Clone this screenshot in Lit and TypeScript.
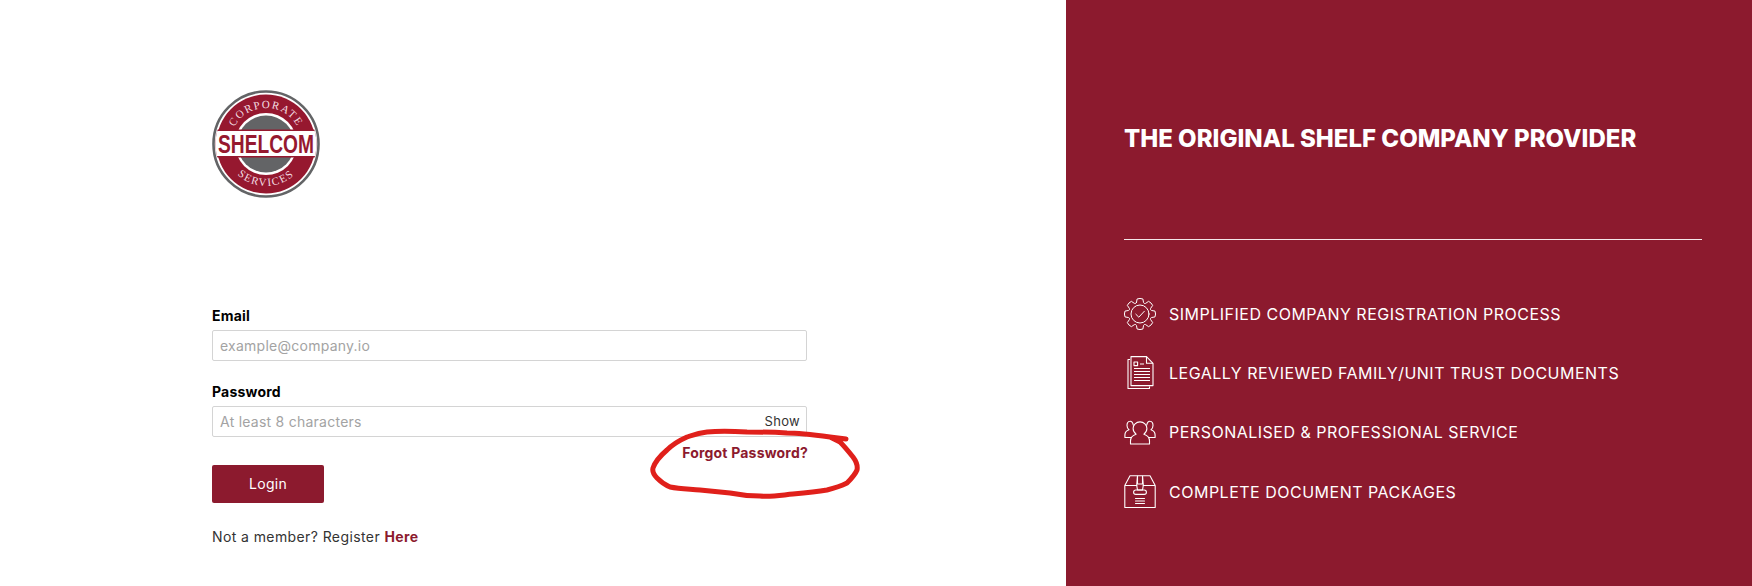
import { LitElement, html, css, svg } from "lit";
import { customElement } from "lit/decorators.js";

const RED = css`#8c1a2e`;

function gearPath(): string {
  const c = 16;
  const pt = (r: number, a: number) =>
    `${(c + r * Math.sin(a)).toFixed(2)} ${(c - r * Math.cos(a)).toFixed(2)}`;
  let d = "";
  for (let i = 0; i < 8; i++) {
    const a = (i * Math.PI) / 4;
    const next = a + Math.PI / 4;
    d += i === 0 ? `M${pt(12, a - 0.3)}` : "";
    d += `L${pt(15.3, a - 0.19)}Q${pt(16.1, a)} ${pt(15.3, a + 0.19)}L${pt(12, a + 0.3)}`;
    d += `Q${pt(10.8, a + Math.PI / 8)} ${pt(12, next - 0.3)}`;
  }
  return d + "Z";
}

const gear = svg`<svg class="ic" viewBox="0 0 32 32" fill="none" stroke="#fff" stroke-width="1" stroke-linejoin="round" stroke-linecap="round">
  <path d=${gearPath()}/>
  <circle cx="16" cy="16" r="9"/><path d="M11.800 16.200l3 3 5.600-6"/></svg>`;
const doc = svg`<svg class="ic doc" viewBox="0 0 27 33" fill="none" stroke="#fff" stroke-width="1.1" stroke-linejoin="round">
  <path d="M3 3.500H1v29h21.500v-2"/><path d="M4 .6h15.500l6.500 6.700v22.300H4z"/><path d="M19.500.6v6.700H26"/>
  <rect x="7" y="6" width="3.600" height="3.600"/>
  <path d="M13 8h4M7 12.500h16M7 15.500h16M7 18.500h16M7 21.500h16M7 24.500h16" stroke-width="1.200"/></svg>`;
const people = svg`<svg class="ic ppl" viewBox="0 0 32 25" fill="none" stroke="#fff" stroke-width="1.1" stroke-linejoin="round" stroke-linecap="round">
  <path d="M6.500 24V21c0-4 3-6 5.600-6.800-1.800-1.300-3-3.300-3-5.600C9.100 4.700 12.100 1.900 16 1.900s6.900 2.800 6.900 6.700c0 2.300-1.200 4.300-3 5.600 2.600.8 5.600 2.800 5.600 6.800v3z"/>
  <path d="M9.300 5.200C8.900 2.700 7.500 1 5.900 1.300 3.700 1.600 3 3.700 3 5.500c0 1.500.6 3.100 2 4.200C2.700 10.500.9 12.300.9 15c0 .8 0 1.800 0 2.500h6.400"/>
  <path d="M22.700 5.200C23.100 2.700 24.500 1 26.100 1.300 28.300 1.600 29 3.700 29 5.500c0 1.500-.6 3.100-2 4.200 2.300.8 4.100 2.600 4.100 5.300 0 .8 0 1.800 0 2.500h-6.400"/></svg>`;
const box = svg`<svg class="ic bx" viewBox="0 0 32 33" fill="none" stroke="#fff" stroke-width="1.1" stroke-linejoin="round" stroke-linecap="round">
  <path d="M.8 10.500L6 .8h6.800M19.200.8H26l5.200 9.700M.8 10.500v22h30.400v-22M.8 10.500h12M19.200 10.500h12"/>
  <path d="M13.500.8h5l.8 9.500-.8 4.700h-5l-.8-4.700z"/><path d="M13.500 1v8h5V1"/>
  <rect x="9.600" y="15" width="12.800" height="4.400" rx="2.200"/>
  <path d="M11.500 23.500h9M11.500 26h9M11.500 28.500h9"/></svg>`;

const logo = svg`<svg class="logo" viewBox="0 0 110 110">
  <defs>
    <path id="arcTop" d="M19 55a36 36 0 0 1 72 0"/>
    <path id="arcBot" d="M13 55a42 42 0 0 0 84 0"/>
    <clipPath id="disc"><circle cx="55" cy="55" r="50.500"/></clipPath>
  </defs>
  <circle cx="55" cy="55" r="52.500" fill="#fff" stroke="#636466" stroke-width="2.600"/>
  <circle cx="55" cy="55" r="49.500" fill="#96182f"/>
  <circle cx="55" cy="55" r="31" fill="#fff"/>
  <circle cx="55" cy="55" r="28.500" fill="#636466"/>
  <g clip-path="url(#disc)">
    <rect x="0" y="40.500" width="110" height="28" fill="#96182f"/>
    <rect x="0" y="42" width="110" height="25" fill="#fff"/>
  </g>
  <text class="sh" x="55" y="64" text-anchor="middle" textLength="96" lengthAdjust="spacingAndGlyphs">SHELCOM</text>
  <text class="arc"><textPath href="#arcTop" startOffset="50%" text-anchor="middle">CORPORATE</textPath></text>
  <text class="arc"><textPath href="#arcBot" startOffset="50%" text-anchor="middle">SERVICES</textPath></text>
</svg>`;

@customElement("app-root")
export class AppRoot extends LitElement {
  static styles = css`
    :host { display: block; position: relative; height: 586px; overflow: hidden; background: #fff;
      font-family: "Inter", "Liberation Sans", sans-serif; }
    .page { display: grid; grid-template-columns: 1066px 686px; height: 586px; }
    .left { padding: 89px 0 0 212px; }
    .logo { display: block; width: 110px; height: 110px; margin-left: -1px; overflow: visible; }
    .sh { font: 700 25px "Liberation Sans", sans-serif; fill: #96182f; }
    .arc { font: 400 11px "Liberation Serif", serif; letter-spacing: 1.500px; fill: #f3dfe2; }
    form { width: 595px; margin-top: 107px; }
    label { display: block; font-size: 14px; font-weight: 700; line-height: 20px; color: #000; margin-bottom: 4px; letter-spacing: .2px; }
    .field { position: relative; height: 31px; box-sizing: border-box; border: 1px solid #d4d4d4; border-radius: 2px;
      padding: 0 7px; font-size: 14px; line-height: 29px; color: #a3a3a3; margin-bottom: 21px; letter-spacing: .25px; }
    .show { position: absolute; right: 6px; top: 0; color: #333; font-size: 13px; letter-spacing: .3px; line-height: 28px; }
    .actions { display: flex; justify-content: space-between; margin-top: -15px; }
    .btn { margin-top: 22px; width: 112px; height: 38px; background: ${RED}; color: #fff; border: 0; border-radius: 2px;
      font: 400 14px "Inter", sans-serif; letter-spacing: .3px; padding: 0 0 2px; }
    .forgot { color: ${RED}; font-size: 14px; font-weight: 700; line-height: 20px; margin-right: -1px; letter-spacing: .2px; }
    .reg { margin-top: 24px; font-size: 14px; line-height: 20px; color: #333; letter-spacing: .4px; }
    .reg b { color: ${RED}; font-weight: 700; }
    .right { background: ${RED}; color: #fff; padding: 124px 50px 0 58px; }
    h1 { margin: 0; font-size: 24px; line-height: 30px; font-weight: 800; letter-spacing: 0; white-space: nowrap; }
    hr { border: 0; height: 1px; background: #fff; margin: 85px 0 0; opacity: .9; }
    ul { list-style: none; margin: 44px 0 0; padding: 0; display: grid; grid-auto-rows: 59.300px; }
    li { display: grid; grid-template-columns: 32px 1fr; column-gap: 13px; align-items: center; font-size: 16px; white-space: nowrap; letter-spacing: .5px; }
    .ic { display: block; width: 32px; height: 32px; }
    .doc { width: 27px; height: 33px; margin-left: 3px; }
    .ppl { height: 25px; }
    .bx { height: 33px; }
    .mark { position: absolute; left: 640px; top: 420px; width: 240px; height: 100px; pointer-events: none; }
  `;

  render() {
    const rows = [
      [gear, "SIMPLIFIED COMPANY REGISTRATION PROCESS"],
      [doc, "LEGALLY REVIEWED FAMILY/UNIT TRUST DOCUMENTS"],
      [people, "PERSONALISED & PROFESSIONAL SERVICE"],
      [box, "COMPLETE DOCUMENT PACKAGES"],
    ];
    return html`<div class="page">
      <section class="left">
        ${logo}
        <form>
          <label>Email</label>
          <div class="field">example@company.io</div>
          <label>Password</label>
          <div class="field">At least 8 characters<span class="show">Show</span></div>
          <div class="actions">
            <button type="button" class="btn">Login</button>
            <span class="forgot">Forgot Password?</span>
          </div>
          <div class="reg">Not a member? Register <b>Here</b></div>
        </form>
      </section>
      <section class="right">
        <h1>THE ORIGINAL SHELF COMPANY PROVIDER</h1>
        <hr />
        <ul>${rows.map(([i, t]) => html`<li>${i}<span>${t}</span></li>`)}</ul>
      </section>
    </div>
    <svg class="mark" viewBox="640 420 240 100" fill="none" stroke="#e0201b" stroke-width="5" stroke-linecap="round" stroke-linejoin="round">
      <path d="M846 439L830 437C815 435 800 433 787 433C770 432 755 432 747 432C730 431 717 431 707 432C698 433 693 435 687 437C678 441 672 445 667 450C660 456 655 462 653 468C652 472 654 475 657 478C661 482 665 485 670 487C680 489 690 489 700 490C710 491 720 492 730 493C740 495 750 496 760 496C772 497 782 495 793 494C805 493 816 492 827 490C835 488 841 486 847 483C851 479 855 475 857 470C858 465 856 461 853 457C849 452 845 447 840 442L830 437"/>
    </svg>`;
  }
}
